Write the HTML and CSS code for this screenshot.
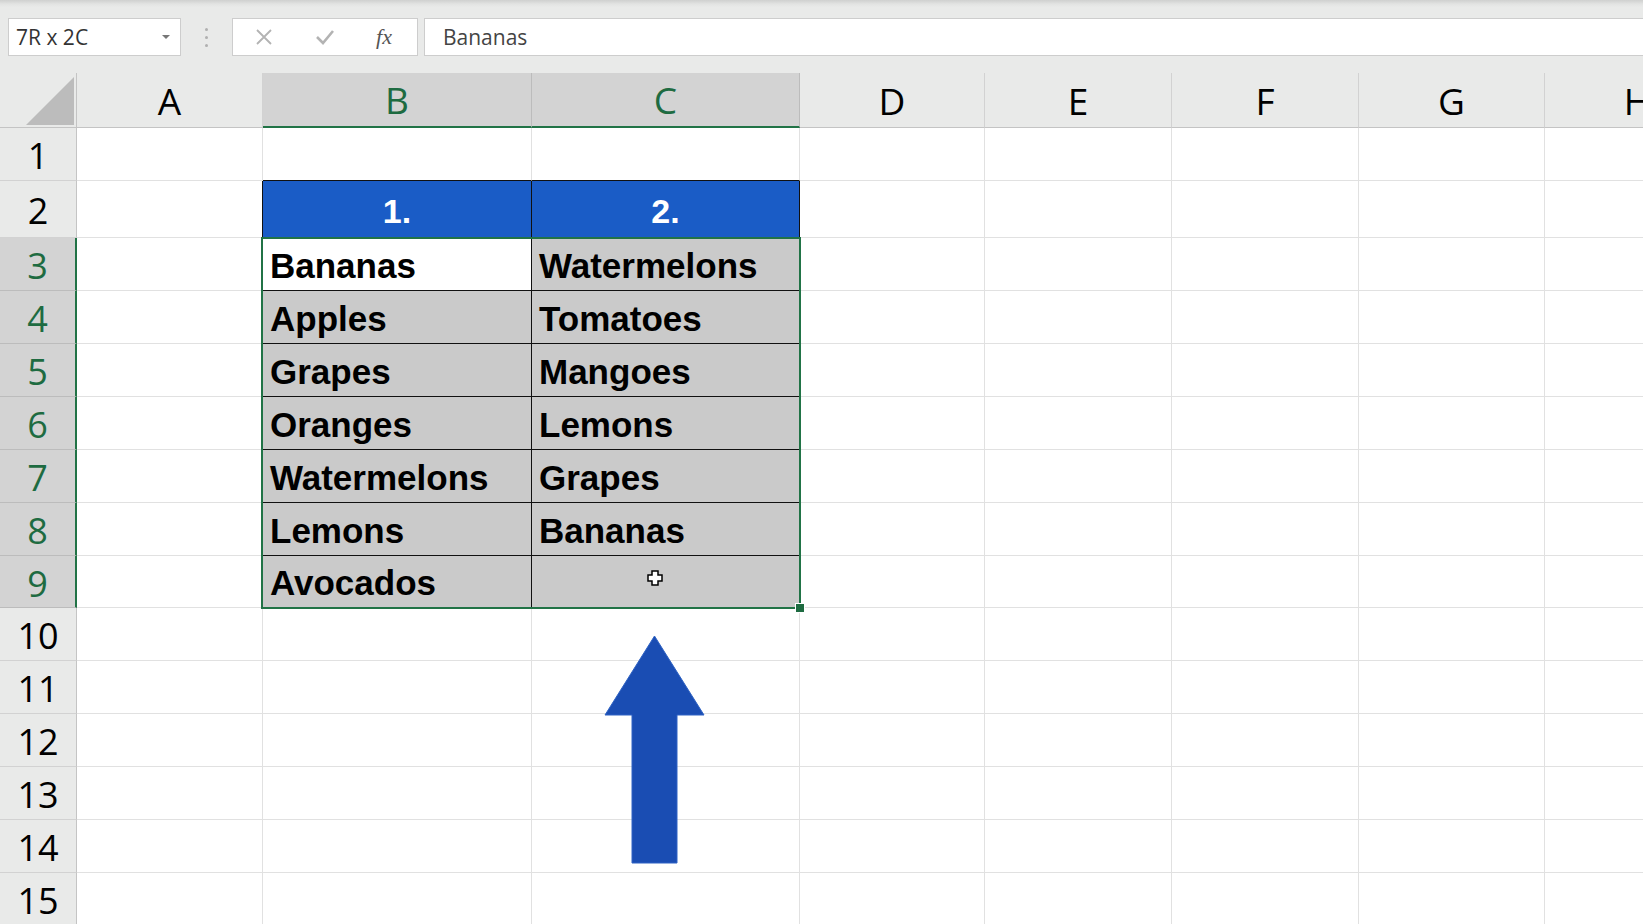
FILE: index.html
```html
<!DOCTYPE html>
<html>
<head>
<meta charset="utf-8">
<link rel="stylesheet" href="styles.css">
</head>
<body>
<div class="app">
  <div class="toolbar">
    <div class="namebox"><span class="nbtext">7R x 2C</span><span class="caret"></span></div>
    <div class="sep"><span></span><span></span><span></span></div>
    <div class="fbtns">
      <svg class="ico" width="18" height="18" viewBox="0 0 18 18"><path d="M2 2 L16 16 M16 2 L2 16" stroke="#b3b3b3" stroke-width="1.8" fill="none"/></svg>
      <svg class="ico" width="20" height="18" viewBox="0 0 20 18"><path d="M2 9 L8 15 L18 3" stroke="#b3b3b3" stroke-width="2.6" fill="none"/></svg>
      <span class="fx">fx</span>
    </div>
    <div class="fbar">Bananas</div>
  </div>
  <div class="sheet">
    <div class="corner"><svg width="77" height="55" viewBox="0 0 77 55"><polygon points="74,4 74,52 26,52" fill="#bcbcbc"/></svg></div>
    <div class="ch">A</div><div class="ch sel">B</div><div class="ch sel">C</div><div class="ch">D</div><div class="ch">E</div><div class="ch">F</div><div class="ch">G</div><div class="ch">H</div>

    <div class="rh">1</div><div class="c"></div><div class="c bb"></div><div class="c bb"></div><div class="c"></div><div class="c"></div><div class="c"></div><div class="c"></div><div class="c"></div>

    <div class="rh">2</div><div class="c br"></div><div class="c tb">1.</div><div class="c tb">2.</div><div class="c"></div><div class="c"></div><div class="c"></div><div class="c"></div><div class="c"></div>

    <div class="rh sel">3</div><div class="c br"></div><div class="c td">Bananas</div><div class="c td gray">Watermelons</div><div class="c"></div><div class="c"></div><div class="c"></div><div class="c"></div><div class="c"></div>

    <div class="rh sel">4</div><div class="c br"></div><div class="c td gray">Apples</div><div class="c td gray">Tomatoes</div><div class="c"></div><div class="c"></div><div class="c"></div><div class="c"></div><div class="c"></div>

    <div class="rh sel">5</div><div class="c br"></div><div class="c td gray">Grapes</div><div class="c td gray">Mangoes</div><div class="c"></div><div class="c"></div><div class="c"></div><div class="c"></div><div class="c"></div>

    <div class="rh sel">6</div><div class="c br"></div><div class="c td gray">Oranges</div><div class="c td gray">Lemons</div><div class="c"></div><div class="c"></div><div class="c"></div><div class="c"></div><div class="c"></div>

    <div class="rh sel">7</div><div class="c br"></div><div class="c td gray">Watermelons</div><div class="c td gray">Grapes</div><div class="c"></div><div class="c"></div><div class="c"></div><div class="c"></div><div class="c"></div>

    <div class="rh sel">8</div><div class="c br"></div><div class="c td gray">Lemons</div><div class="c td gray">Bananas</div><div class="c"></div><div class="c"></div><div class="c"></div><div class="c"></div><div class="c"></div>

    <div class="rh sel">9</div><div class="c br"></div><div class="c td gray">Avocados</div><div class="c td gray"></div><div class="c"></div><div class="c"></div><div class="c"></div><div class="c"></div><div class="c"></div>

    <div class="rh">10</div><div class="c"></div><div class="c"></div><div class="c"></div><div class="c"></div><div class="c"></div><div class="c"></div><div class="c"></div><div class="c"></div>
    <div class="rh">11</div><div class="c"></div><div class="c"></div><div class="c"></div><div class="c"></div><div class="c"></div><div class="c"></div><div class="c"></div><div class="c"></div>
    <div class="rh">12</div><div class="c"></div><div class="c"></div><div class="c"></div><div class="c"></div><div class="c"></div><div class="c"></div><div class="c"></div><div class="c"></div>
    <div class="rh">13</div><div class="c"></div><div class="c"></div><div class="c"></div><div class="c"></div><div class="c"></div><div class="c"></div><div class="c"></div><div class="c"></div>
    <div class="rh">14</div><div class="c"></div><div class="c"></div><div class="c"></div><div class="c"></div><div class="c"></div><div class="c"></div><div class="c"></div><div class="c"></div>
    <div class="rh">15</div><div class="c"></div><div class="c"></div><div class="c"></div><div class="c"></div><div class="c"></div><div class="c"></div><div class="c"></div><div class="c"></div>

    <div class="selbox"><div class="handle"></div></div>
    <svg class="overlay" width="1643" height="851" viewBox="0 73 1643 851">
      <polygon points="654.5,636 704,715 677,715 677,863 632,863 632,715 605,715" fill="#1a4db3" stroke="#2f63c4" stroke-width="1"/>
      <path d="M652 571 h6 v4 h4 v6 h-4 v4 h-6 v-4 h-4 v-6 h4 z" fill="#fff" stroke="#000" stroke-width="1.5"/>
    </svg>
  </div>
</div>
</body>
</html>
```
FILE: styles.css
```css
html, body {
  margin: 0;
  padding: 0;
  width: 1643px;
  height: 924px;
  overflow: hidden;
  background: #ffffff;
}
.app {
  width: 1643px;
  height: 924px;
  overflow: hidden;
  font-family: "Open Sans", "Liberation Sans", sans-serif;
}
.toolbar {
  height: 73px;
  box-sizing: border-box;
  padding: 18px 0 17px 8px;
  display: flex;
  align-items: stretch;
  background: linear-gradient(#cfd0cf 0px, #e2e3e2 4px, #e9eae9 7px, #e9eae9 100%);
}
.namebox {
  width: 173px;
  box-sizing: border-box;
  background: #fff;
  border: 1px solid #cdcdcd;
  display: flex;
  align-items: center;
  justify-content: space-between;
  padding: 0 10px 0 7px;
}
.nbtext {
  font-size: 21px;
  color: #333;
}
.caret {
  width: 0;
  height: 0;
  border-left: 4px solid transparent;
  border-right: 4px solid transparent;
  border-top: 4px solid #777;
}
.sep {
  width: 51px;
  display: flex;
  flex-direction: column;
  align-items: center;
  justify-content: center;
  gap: 5px;
}
.sep span {
  width: 3px;
  height: 3px;
  border-radius: 50%;
  background: #b0b0b0;
}
.fbtns {
  width: 186px;
  box-sizing: border-box;
  background: #fff;
  border: 1px solid #cdcdcd;
  display: flex;
  align-items: center;
  justify-content: space-between;
  padding: 0 25px 0 22px;
}
.fx {
  font-family: "Liberation Serif", serif;
  font-style: italic;
  font-size: 22px;
  color: #555;
  letter-spacing: 0px;
}
.fbar {
  flex: 1;
  margin-left: 6px;
  background: #fff;
  border: 1px solid #cdcdcd;
  border-right: none;
  display: flex;
  align-items: center;
  padding-left: 18px;
  font-size: 21px;
  color: #444;
}
.sheet {
  position: relative;
  display: grid;
  grid-template-columns: 77px 186px 269px 268px 185px 187px 187px 186px 186px;
  grid-template-rows: 55px 53px 57px 53px 53px 53px 53px 53px 53px 52px 53px 53px 53px 53px 53px 53px;
  height: 851px;
  overflow: hidden;
}
.corner {
  background: #e9eae9;
  border-right: 1px solid #c4c4c4;
  border-bottom: 1px solid #c4c4c4;
  box-sizing: border-box;
}
.corner svg { display: block; }
.ch {
  box-sizing: border-box;
  background: #e9eae9;
  border-right: 1px solid #d2d2d2;
  border-bottom: 1px solid #c4c4c4;
  display: flex;
  align-items: center;
  justify-content: center;
  font-size: 37px;
  color: #000;
  line-height: 1;
}
.ch.sel {
  background: #d3d3d3;
  color: #1e6b41;
  border-bottom: 2px solid #217346;
  border-right-color: #bcbcbc;
}
.rh {
  box-sizing: border-box;
  background: #e9eae9;
  border-right: 1px solid #c4c4c4;
  border-bottom: 1px solid #d2d2d2;
  display: flex;
  align-items: center;
  justify-content: center;
  font-size: 36px;
  color: #000;
  line-height: 1;
  padding-top: 4px;
}
.rh.sel {
  background: #d3d3d3;
  color: #1e6b41;
  border-right: 2px solid #217346;
  border-bottom-color: #bcbcbc;
}
.c {
  box-sizing: border-box;
  border-right: 1px solid #e1e1e1;
  border-bottom: 1px solid #e1e1e1;
  background: #fff;
}
.c.bb { border-bottom-color: #111; }
.c.br { border-right-color: #111; }
.c.tb {
  background: #1a5cc6;
  border-right-color: #111;
  border-bottom-color: #111;
  color: #fff;
  font-family: "Liberation Sans", Arial, sans-serif;
  font-weight: bold;
  font-size: 34px;
  display: flex;
  align-items: flex-end;
  justify-content: center;
  line-height: 1;
  padding-bottom: 9px;
}
.c.td {
  border-right-color: #111;
  border-bottom-color: #111;
  color: #000;
  font-family: "Liberation Sans", Arial, sans-serif;
  font-weight: bold;
  font-size: 35px;
  display: flex;
  align-items: flex-end;
  padding-left: 7px;
  line-height: 1;
  padding-bottom: 7px;
  white-space: nowrap;
}
.c.td.gray { background: #cacaca; }
.selbox {
  position: absolute;
  left: 261px;
  top: 164px;
  width: 540px;
  height: 372px;
  box-sizing: border-box;
  border: 2px solid #217346;
  pointer-events: none;
}
.handle {
  position: absolute;
  right: -6px;
  bottom: -6px;
  width: 8px;
  height: 8px;
  background: #1e6b41;
  border: 1px solid #fff;
}
.overlay {
  position: absolute;
  left: 0;
  top: 0;
  pointer-events: none;
}
```
